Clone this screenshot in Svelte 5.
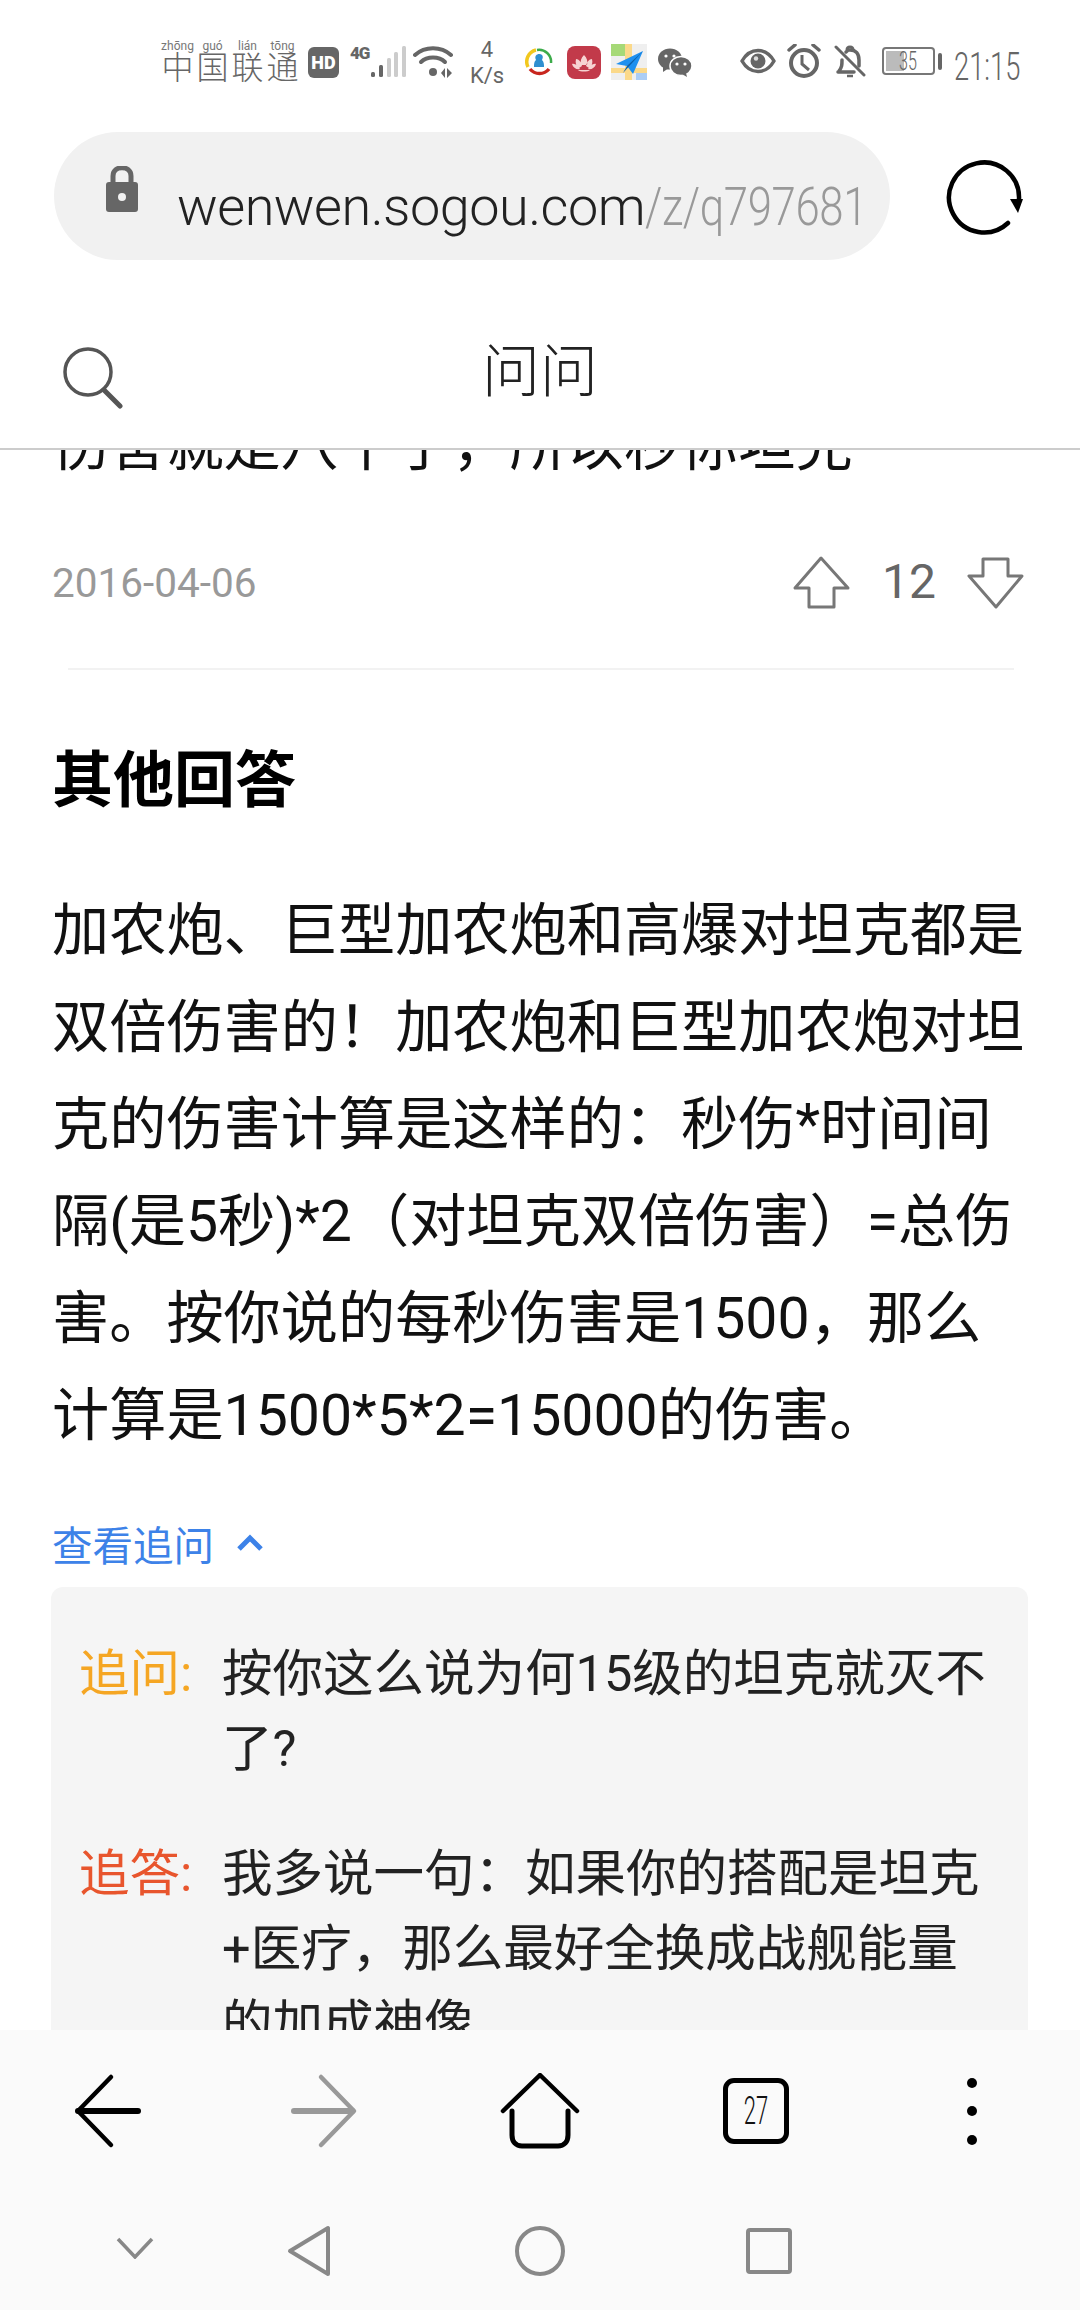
<script>
  const carrier = [["zhōng", "中"], ["guó", "国"], ["lián", "联"], ["tōng", "通"]];
  const bars = [
    { x: 1, y: 26, on: true },
    { x: 9, y: 19, on: true },
    { x: 17, y: 12, on: false },
    { x: 24, y: 6, on: false },
    { x: 32, y: 0, on: false }
  ];
</script>

<div class="page">
  <div class="status">
    <div class="carrier">
      {#each carrier as c}
        <div class="cchar"><span class="py">{c[0]}</span><span class="hz">{c[1]}</span></div>
      {/each}
    </div>
    <div class="hd">HD</div>
    <div class="net">
      <span class="g4">4G</span>
      <svg width="38" height="32" viewBox="0 0 38 32">
        {#each bars as b}
          <rect x={b.x} y={b.y} width="4" height={31 - b.y} rx="1.5" fill={b.on ? "#666" : "#ccc"} />
        {/each}
      </svg>
    </div>
    <svg class="wifi" width="40" height="32" viewBox="0 0 40 32">
      <path d="M2 9C12 0 28 0 38 9" fill="none" stroke="#666" stroke-width="4" stroke-linecap="round" />
      <path d="M8 16C14 10 26 10 32 16" fill="none" stroke="#666" stroke-width="4" stroke-linecap="round" />
      <circle cx="20" cy="26" r="4" fill="#666" />
      <path d="M28 27l4-5v10zM34 22l5 5-5 5z" fill="#666" />
    </svg>
    <div class="speed"><span>4</span><span>K/s</span></div>
    <svg class="news" width="28" height="28" viewBox="0 0 28 28">
      <path d="M3 19A12 12 0 0 1 11 2" fill="none" stroke="#f2c81e" stroke-width="3.5" />
      <path d="M12 2A12 12 0 0 1 26 15" fill="none" stroke="#3cab4a" stroke-width="2.5" />
      <path d="M5 21C10 27 19 27 24 21" fill="none" stroke="#c8261e" stroke-width="3.5" />
      <path d="M9 19C9 14 10 13 11 12C9 8 12 6 14 6C17 6 19 8 17 12C19 14 19 16 19 19z" fill="#2f8fd0" />
    </svg>
    <svg class="lotus" width="34" height="33" viewBox="0 0 34 33">
      <rect width="34" height="33" rx="8" fill="#c23a4a" />
      <path d="M17 9C20 12 21 15 20 19L14 19C13 15 14 12 17 9zM9 13C12 13 14 16 15 20L12 22C9 20 8 17 9 13zM25 13C22 13 20 16 19 20L22 22C25 20 26 17 25 13zM5 18C8 17 11 20 13 23C10 24 6 22 5 18zM29 18C26 17 23 20 21 23C24 24 28 22 29 18zM11 24H23C21 26 13 26 11 24z" fill="#f6d3d2" />
    </svg>
    <svg class="map" width="36" height="36" viewBox="0 0 36 36">
      <rect width="36" height="36" fill="#efefef" />
      <rect width="14" height="12" fill="#a6d977" />
      <rect x="14" width="7" height="36" fill="#fbd98a" />
      <rect y="24" width="36" height="5" fill="#fbd98a" />
      <rect x="25" y="29" width="11" height="7" fill="#abcdf5" />
      <path d="M5 20L32 7L22 30L16 22z" fill="#1e90f0" />
      <path d="M16 22L32 7L12 29z" fill="#0d5fa8" />
    </svg>
    <svg class="wechat" width="34" height="29" viewBox="0 0 34 29">
      <ellipse cx="12" cy="11" rx="12" ry="10.5" fill="#666" />
      <path d="M5 18l0 6 6-4z" fill="#666" />
      <circle cx="8" cy="8" r="1.6" fill="#fff" />
      <circle cx="16" cy="8" r="1.6" fill="#fff" />
      <ellipse cx="23" cy="18" rx="11" ry="9.5" fill="#666" stroke="#fff" stroke-width="1.5" />
      <path d="M28 25l1 4-5-3z" fill="#666" />
      <circle cx="19" cy="16" r="1.6" fill="#fff" />
      <circle cx="27" cy="16" r="1.6" fill="#fff" />
    </svg>
    <svg class="eye" width="36" height="26" viewBox="0 0 36 26">
      <path d="M2 13C10 -1 26 -1 34 13C26 27 10 27 2 13z" fill="none" stroke="#666" stroke-width="3.5" stroke-linejoin="round" />
      <circle cx="18" cy="13" r="7.5" fill="#666" />
      <circle cx="16" cy="10.5" r="2.2" fill="#ddd" />
    </svg>
    <svg class="clock" width="34" height="34" viewBox="0 0 34 34">
      <circle cx="17" cy="19" r="13" fill="none" stroke="#666" stroke-width="4" />
      <path d="M15 11V20L22 26" fill="none" stroke="#666" stroke-width="3" />
      <path d="M2 6L8 1M26 1L32 6" stroke="#666" stroke-width="3.5" stroke-linecap="round" />
    </svg>
    <svg class="bell" width="32" height="34" viewBox="0 0 32 34">
      <path d="M5 26C8 22 8 20 8 15M12 7C14 5 14 5 16 5C22 5 25 9 25 15V21M4 27H20" fill="none" stroke="#666" stroke-width="3.5" stroke-linecap="round" />
      <path d="M13 5C13 1 19 1 19 5" fill="none" stroke="#666" stroke-width="3" />
      <path d="M13 31H19" stroke="#666" stroke-width="2.5" />
      <path d="M2 2L30 30" stroke="#666" stroke-width="3" stroke-linecap="round" />
    </svg>
    <div class="battery">
      <div class="cell"><div class="level"></div><span class="pct">35</span></div>
      <div class="tip"></div>
    </div>
    <div class="time">21:15</div>
  </div>

  <div class="addr">
    <div class="pill">
      <svg class="lock" width="34" height="46" viewBox="0 0 34 46">
        <path d="M8 20V10C8 -1 26 -1 26 10V20" fill="none" stroke="#666" stroke-width="5" />
        <rect x="1" y="16" width="32" height="30" rx="3" fill="#666" />
        <circle cx="17" cy="31" r="4" fill="#f1f1f1" />
      </svg>
      <div class="url">wenwen.sogou.com<span class="path">/z/q797681</span></div>
    </div>
    <svg class="refresh" width="80" height="80" viewBox="0 0 80 80">
      <path d="M64 65A35 35 0 1 1 75 41" fill="none" stroke="#000" stroke-width="4.5" stroke-linecap="round" />
      <path d="M66 41H79L74 55z" fill="#000" />
    </svg>
  </div>

  <header class="head">
    <svg class="search" width="62" height="62" viewBox="0 0 62 62">
      <circle cx="26" cy="25" r="23" fill="none" stroke="#555" stroke-width="3.5" />
      <path d="M42 43L58 59" stroke="#555" stroke-width="5" stroke-linecap="round" />
    </svg>
    <div class="title">问问</div>
  </header>

  <main class="scroll">
    <div class="content">
      <p class="answer">伤害就是八千了，所以秒你坦克</p>
      <div class="meta">
        <span class="date">2016-04-06</span>
        <svg width="60" height="56" viewBox="0 0 60 56">
          <path d="M29 3L3 33H17V52H42V33H56z" fill="none" stroke="#777" stroke-width="3" stroke-linejoin="round" />
        </svg>
        <span class="votes">12</span>
        <svg width="60" height="56" viewBox="0 0 60 56">
          <path d="M17 4H42V21H56L30 52L3 21H17z" fill="none" stroke="#777" stroke-width="3" stroke-linejoin="round" />
        </svg>
      </div>
      <div class="divider"></div>
      <h2>其他回答</h2>
      <p class="answer other">加农炮、巨型加农炮和高爆对坦克都是双倍伤害的！加农炮和巨型加农炮对坦克的伤害计算是这样的：秒伤*时间间隔(是5秒)*2（对坦克双倍伤害）=总伤害。按你说的每秒伤害是1500，那么计算是1500*5*2=15000的伤害。</p>
      <div class="more">
        <span>查看追问</span>
        <svg width="28" height="18" viewBox="0 0 28 18">
          <path d="M3 15L14 4L25 15" fill="none" stroke="#3d82e8" stroke-width="5" />
        </svg>
      </div>
      <div class="thread">
        <div class="item">
          <span class="label ask">追问:</span>
          <span class="body">按你这么说为何15级的坦克就灭不了?</span>
        </div>
        <div class="item">
          <span class="label reply">追答:</span>
          <span class="body">我多说一句：如果你的搭配是坦克+医疗，那么最好全换成战舰能量的加成神像</span>
        </div>
      </div>
    </div>
  </main>

  <footer class="bottom">
    <div class="tools">
      <svg width="76" height="76" viewBox="0 0 76 76">
        <path d="M39 4L6 38L39 72" transform="translate(2 0)" fill="none" stroke="#000" stroke-width="4.5" stroke-linecap="round" stroke-linejoin="round" />
        <path d="M8 38H68" stroke="#000" stroke-width="6" stroke-linecap="round" />
      </svg>
      <svg width="76" height="76" viewBox="0 0 76 76">
        <path d="M37 4L70 38L37 72" transform="translate(-2 0)" fill="none" stroke="#999" stroke-width="4.5" stroke-linecap="round" stroke-linejoin="round" />
        <path d="M8 38H66" stroke="#999" stroke-width="6" stroke-linecap="round" />
      </svg>
      <svg width="84" height="76" viewBox="0 0 84 76">
        <path d="M5 38L42 2L79 38" fill="none" stroke="#000" stroke-width="4.5" stroke-linecap="round" stroke-linejoin="round" />
        <path d="M14 38V62C14 69 18 73 24 73H60C66 73 70 69 70 62V38" fill="none" stroke="#000" stroke-width="5" stroke-linecap="round" />
      </svg>
      <div class="tabs"><span>27</span></div>
      <div class="dots"><i></i><i></i><i></i></div>
    </div>
    <div class="nav">
      <svg class="n1" width="38" height="22" viewBox="0 0 38 22">
        <path d="M2 2L19 20L36 2" fill="none" stroke="#888" stroke-width="3.5" />
      </svg>
      <svg class="n2" width="44" height="52" viewBox="0 0 44 52">
        <path d="M41 3V49L3 26z" fill="none" stroke="#888" stroke-width="4" stroke-linejoin="round" />
      </svg>
      <svg class="n3" width="50" height="50" viewBox="0 0 50 50">
        <circle cx="25" cy="25" r="23" fill="none" stroke="#888" stroke-width="4" />
      </svg>
      <svg class="n4" width="46" height="46" viewBox="0 0 46 46">
        <rect x="2" y="2" width="42" height="42" rx="2" fill="none" stroke="#888" stroke-width="4" />
      </svg>
    </div>
  </footer>
</div>

<style>
  :global(body) {
    margin: 0;
    background: #fff;
  }
  .page {
    width: 1080px;
    height: 2310px;
    display: flex;
    flex-direction: column;
    overflow: hidden;
    font-family: Roboto, "Noto Sans CJK SC", sans-serif;
    background: #fff;
  }

  /* status bar */
  .status {
    height: 100px;
    padding-left: 160px;
    display: flex;
    align-items: center;
    color: #666;
    flex: none;
  }
  .carrier {
    display: flex;
    width: 140px;
    margin-top: 24px;
  }
  .cchar {
    width: 35px;
    display: flex;
    flex-direction: column;
    align-items: center;
  }
  .py {
    font-size: 12px;
    line-height: 12px;
    color: #777;
  }
  .hz {
    font-size: 32px;
    line-height: 32px;
    font-weight: 300;
    color: #666;
  }
  .hd {
    margin: 24px 0 0 8px;
    width: 31px;
    height: 31px;
    border-radius: 6px;
    background: #666;
    color: #fff;
    font-size: 18px;
    font-weight: 900;
    line-height: 31px;
    text-align: center;
  }
  .net {
    margin: 24px 0 0 11px;
    width: 58px;
    height: 32px;
    display: flex;
    position: relative;
  }
  .g4 {
    position: absolute;
    left: 0;
    top: -3px;
    font-size: 17px;
    font-weight: 900;
    letter-spacing: -1px;
  }
  .net svg {
    margin-left: 20px;
    flex: none;
  }
  .wifi { margin: 24px 0 0 5px; }
  .speed {
    margin: 26px 0 0 16px;
    width: 36px;
    display: flex;
    flex-direction: column;
    align-items: center;
    font-size: 22px;
    line-height: 26px;
  }
  .news { margin: 23px 0 0 20px; }
  .lotus { margin: 24px 0 0 14px; }
  .map { margin: 24px 0 0 10px; }
  .wechat { margin: 24px 0 0 11px; }
  .eye { margin: 21px 0 0 48px; }
  .clock { margin: 21px 0 0 11px; }
  .bell { margin: 23px 0 0 13px; }
  .battery {
    margin: 22px 0 0 16px;
    display: flex;
    align-items: center;
    gap: 3px;
  }
  .cell {
    width: 53px;
    height: 28px;
    box-sizing: border-box;
    border: 2px solid #777;
    border-radius: 4px;
    position: relative;
  }
  .level {
    position: absolute;
    left: 2px;
    top: 2px;
    bottom: 2px;
    width: 18px;
    background: #bbb;
  }
  .pct {
    position: absolute;
    left: 15px;
    top: -3px;
    font-size: 26px;
    line-height: 30px;
    font-weight: 300;
    display: inline-block;
    transform: scaleX(0.62);
    transform-origin: left;
  }
  .tip {
    width: 4px;
    height: 17px;
    border-radius: 2px;
    background: #666;
  }
  .time {
    margin: 33px 0 0 12px;
    width: 65px;
    font-size: 38px;
    line-height: 38px;
    font-weight: 300;
    white-space: nowrap;
    transform: scaleX(0.72);
    transform-origin: left;
  }

  /* address bar */
  .addr {
    height: 180px;
    padding: 32px 0 0 54px;
    box-sizing: border-box;
    display: flex;
    flex: none;
  }
  .pill {
    width: 836px;
    height: 128px;
    flex: none;
    border-radius: 64px;
    background: #f1f1f1;
    display: flex;
    align-items: center;
    padding-left: 51px;
    box-sizing: border-box;
  }
  .lock {
    flex: none;
    margin-top: -14px;
  }
  .url {
    margin: 20px 0 0 38px;
    width: 690px;
    flex: none;
    font-size: 54px;
    font-weight: 300;
    color: #222;
    white-space: nowrap;
    letter-spacing: -0.5px;
  }
  .path {
    color: #999;
    display: inline-block;
    transform: scaleX(0.81);
    transform-origin: left;
  }
  .refresh { margin: 26px 0 0 54px; }

  /* page header */
  .head {
    height: 170px;
    box-sizing: border-box;
    border-bottom: 2px solid #ccc;
    display: flex;
    align-items: center;
    justify-content: center;
    position: relative;
    flex: none;
    background: #fff;
  }
  .search {
    position: absolute;
    left: 62px;
    top: 67px;
  }
  .title {
    font-size: 58px;
    font-weight: 300;
    color: #222;
    margin-top: 6px;
  }

  /* scrolled page */
  .scroll {
    flex: 1;
    min-height: 0;
    overflow: hidden;
  }
  .content {
    margin-top: -53px;
    padding: 0 50px 0 52px;
  }
  .answer {
    margin: 0;
    font-size: 57.2px;
    line-height: 97px;
    color: #111;
  }
  .meta {
    margin: 49px 4px 0 0;
    height: 80px;
    display: flex;
    align-items: center;
  }
  .date {
    font-size: 40.5px;
    color: #999;
    margin-right: auto;
  }
  .votes {
    font-size: 48px;
    color: #666;
    width: 54px;
    margin: 0 30px 4px 30px;
  }
  .divider {
    margin: 45px 16px 0 16px;
    height: 2px;
    background: #f2f2f2;
  }
  h2 {
    margin: 71px 0 0;
    font-size: 61px;
    line-height: 80px;
    font-weight: 700;
    color: #000;
  }
  .other { margin-top: 61px; }
  .more {
    margin-top: 49px;
    height: 60px;
    display: flex;
    align-items: center;
    gap: 22px;
    font-size: 40.5px;
    color: #3d82e8;
  }
  .thread {
    margin: 14px 0 0 -1px;
    width: 977px;
    box-sizing: border-box;
    padding: 49px 28px 40px;
    border-radius: 12px;
    background: #f5f5f5;
    display: flex;
    flex-direction: column;
    gap: 50px;
  }
  .item {
    display: flex;
    font-size: 50.5px;
    line-height: 75px;
    color: #222;
  }
  .label {
    width: 143px;
    flex: none;
  }
  .ask { color: #f5a623; }
  .reply { color: #e8552d; }
  .body { width: 775px; }

  /* browser toolbar and nav bar */
  .bottom {
    height: 280px;
    flex: none;
    background: #fafafa;
    position: relative;
  }
  .tools {
    height: 162px;
    display: grid;
    grid-template-columns: repeat(5, 216px);
    justify-items: center;
    align-items: center;
  }
  .tabs {
    width: 66px;
    height: 66px;
    box-sizing: border-box;
    border: 5px solid #000;
    border-radius: 11px;
    display: flex;
    align-items: center;
    justify-content: center;
  }
  .tabs span {
    font-size: 38px;
    font-weight: 300;
    color: #111;
    transform: scaleX(0.58);
  }
  .dots {
    height: 67px;
    display: flex;
    flex-direction: column;
    justify-content: space-between;
  }
  .dots i {
    width: 10px;
    height: 10px;
    border-radius: 50%;
    background: #000;
  }
  .nav {
    height: 118px;
    padding-left: 116px;
    display: flex;
    align-items: center;
  }
  .n1 { margin: -6px 0 0 0; }
  .n2 { margin-left: 133px; }
  .n3 { margin-left: 184px; }
  .n4 { margin-left: 181px; }
</style>
